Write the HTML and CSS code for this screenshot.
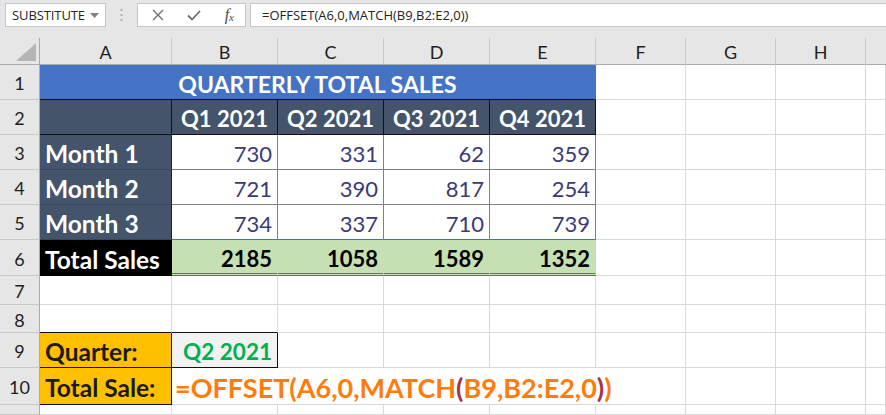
FILE: index.html
```html
<!DOCTYPE html>
<html>
<head>
<meta charset="utf-8">
<link rel="stylesheet" href="styles.css">
</head>
<body>
<div class="app">
  <div class="toolbar">
    <div class="namebox">
      <span class="nbtext">SUBSTITUTE</span>
      <svg class="caret" width="9" height="5" viewBox="0 0 9 5"><path d="M0 0H9L4.5 5Z" fill="#808080"/></svg>
    </div>
    <div class="dots">
      <svg width="3" height="14" viewBox="0 0 3 14"><rect x="0.5" y="1" width="2" height="2" fill="#b0b0b0"/><rect x="0.5" y="6" width="2" height="2" fill="#b0b0b0"/><rect x="0.5" y="11" width="2" height="2" fill="#b0b0b0"/></svg>
    </div>
    <div class="fbtns">
      <svg class="ic" width="12" height="12" viewBox="0 0 12 12"><path d="M1 1L11 11M11 1L1 11" stroke="#6e6e6e" stroke-width="1.4" fill="none"/></svg>
      <svg class="ic" width="14" height="11" viewBox="0 0 14 11"><path d="M1 5.5L5 9.5L13 1" stroke="#6e6e6e" stroke-width="1.8" fill="none"/></svg>
      <span class="fx">f<sub>x</sub></span>
    </div>
    <div class="fbar">=OFFSET(A6,0,MATCH(B9,B2:E2,0))</div>
  </div>

  <div class="sheet">
    <!-- column headers -->
    <div class="corner"><svg width="20" height="18" viewBox="0 0 20 18"><path d="M20 0V18H0Z" fill="#b5b5b5"/></svg></div>
    <div class="ch">A</div><div class="ch">B</div><div class="ch">C</div><div class="ch">D</div><div class="ch">E</div><div class="ch">F</div><div class="ch">G</div><div class="ch">H</div><div class="ch last"></div>

    <!-- row 1 -->
    <div class="rh">1</div>
    <div class="c title">QUARTERLY TOTAL SALES</div>
    <div class="c"></div><div class="c"></div><div class="c"></div><div class="c"></div>

    <!-- row 2 -->
    <div class="rh">2</div>
    <div class="c hd"></div>
    <div class="c hd q">Q1 2021</div><div class="c hd q">Q2 2021</div><div class="c hd q">Q3 2021</div><div class="c hd q">Q4 2021</div>
    <div class="c"></div><div class="c"></div><div class="c"></div><div class="c"></div>

    <!-- row 3 -->
    <div class="rh">3</div>
    <div class="c mo">Month 1</div>
    <div class="c num">730</div><div class="c num">331</div><div class="c num">62</div><div class="c num">359</div>
    <div class="c"></div><div class="c"></div><div class="c"></div><div class="c"></div>

    <!-- row 4 -->
    <div class="rh">4</div>
    <div class="c mo">Month 2</div>
    <div class="c num">721</div><div class="c num">390</div><div class="c num">817</div><div class="c num">254</div>
    <div class="c"></div><div class="c"></div><div class="c"></div><div class="c"></div>

    <!-- row 5 -->
    <div class="rh">5</div>
    <div class="c mo">Month 3</div>
    <div class="c num lastnum">734</div><div class="c num lastnum">337</div><div class="c num lastnum">710</div><div class="c num lastnum">739</div>
    <div class="c"></div><div class="c"></div><div class="c"></div><div class="c"></div>

    <!-- row 6 -->
    <div class="rh">6</div>
    <div class="c tot">Total Sales</div>
    <div class="c totn">2185</div><div class="c totn">1058</div><div class="c totn">1589</div><div class="c totn end">1352</div>
    <div class="c"></div><div class="c"></div><div class="c"></div><div class="c"></div>

    <!-- row 7 -->
    <div class="rh">7</div>
    <div class="c"></div><div class="c"></div><div class="c"></div><div class="c"></div><div class="c"></div><div class="c"></div><div class="c"></div><div class="c"></div><div class="c"></div>

    <!-- row 8 -->
    <div class="rh">8</div>
    <div class="c abovebox"></div><div class="c abovebox"></div><div class="c"></div><div class="c"></div><div class="c"></div><div class="c"></div><div class="c"></div><div class="c"></div><div class="c"></div>

    <!-- row 9 -->
    <div class="rh">9</div>
    <div class="c lbl">Quarter:</div>
    <div class="c qv">Q2 2021</div>
    <div class="c"></div><div class="c"></div><div class="c"></div><div class="c"></div><div class="c"></div><div class="c"></div><div class="c"></div>

    <!-- row 10 -->
    <div class="rh">10</div>
    <div class="c lbl">Total Sale:</div>
    <div class="c formula">=OFFSET(A6,0,MATCH<span class="pr">(</span>B9,B2:E2,0<span class="pr">)</span>)</div>
    <div class="c"></div><div class="c"></div><div class="c"></div>

    <!-- row 11 -->
    <div class="rh"></div>
    <div class="c"></div><div class="c"></div><div class="c"></div><div class="c"></div><div class="c"></div><div class="c"></div><div class="c"></div><div class="c"></div><div class="c"></div>
  </div>
</div>
</body>
</html>
```

FILE: styles.css
```css
* { box-sizing: border-box; }
html, body { margin: 0; padding: 0; }
body {
  width: 886px;
  height: 415px;
  overflow: hidden;
  background: #ffffff;
  font-family: "Lato", "Open Sans", sans-serif;
}
.app {
  display: flex;
  flex-direction: column;
  height: 415px;
}

/* ---------- toolbar ---------- */
.toolbar {
  height: 38px;
  background: #e6e6e6;
  display: flex;
  align-items: flex-start;
  padding: 3px 0 0 5px;
  font-family: "Open Sans", "Noto Sans", sans-serif;
}
.namebox {
  width: 101px;
  height: 24px;
  background: #fff;
  border: 1px solid #c6c6c6;
  display: flex;
  align-items: center;
  padding: 0 6px 0 6px;
  justify-content: space-between;
}
.nbtext {
  font-size: 13px;
  color: #262626;
  letter-spacing: -0.1px;
}
.caret { margin-top: 1px; }
.dots {
  width: 31px;
  height: 24px;
  display: flex;
  align-items: center;
  justify-content: center;
}
.fbtns {
  width: 109px;
  height: 24px;
  background: #fff;
  border: 1px solid #c6c6c6;
  display: flex;
  align-items: center;
  padding: 0 11px 0 14px;
  justify-content: space-between;
}
.fx {
  font-family: "Liberation Serif", "DejaVu Serif", serif;
  font-style: italic;
  font-size: 16px;
  color: #4a4a4a;
  line-height: 1;
}
.fx sub { font-size: 11px; vertical-align: -1px; }
.fbar {
  margin-left: 4px;
  flex: 1;
  height: 24px;
  background: #fff;
  border: 1px solid #c6c6c6;
  border-right: none;
  display: flex;
  align-items: center;
  padding-left: 11px;
  font-size: 13px;
  color: #222;
}

/* ---------- sheet ---------- */
.sheet {
  flex: 1;
  display: grid;
  grid-template-columns: 40px 132px 106px 106px 106px 106px 90px 90px 90px 1fr;
  grid-template-rows: 27px 35px 35px 35px 35px 35px 36px 29px 28px 35px 37px 1fr;
  background: #fff;
}
.corner {
  background: #e6e6e6;
  border-right: 1px solid #ababab;
  border-bottom: 1px solid #ababab;
  display: flex;
  align-items: flex-end;
  justify-content: flex-end;
  padding: 0 3px 3px 0;
}
.ch {
  background: #e6e6e6;
  border-right: 1px solid #c8c8c8;
  border-bottom: 1px solid #ababab;
  display: flex;
  align-items: center;
  justify-content: center;
  font-size: 18px;
  color: #1e1e1e;
  padding-top: 1px;
}
.ch.last { border-right: none; }
.rh {
  background: #e6e6e6;
  border-right: 1px solid #ababab;
  border-bottom: 1px solid #c8c8c8;
  display: flex;
  align-items: center;
  justify-content: center;
  font-size: 18px;
  color: #1e1e1e;
  padding-top: 2px;
}
.c {
  border-right: 1px solid #d9d9d9;
  border-bottom: 1px solid #d9d9d9;
  display: flex;
  align-items: center;
  font-size: 22px;
  white-space: nowrap;
  padding: 3px 5px 0 5px;
}
.title {
  grid-column: 2 / span 5;
  background: #4472c4;
  color: #fff;
  font-weight: 700;
  font-size: 23px;
  justify-content: center;
  border-right-color: #4472c4;
  border-bottom-color: #111;
}
.hd {
  background: #44546a;
  border-right-color: #111;
  border-bottom-color: #111;
}
.q {
  color: #fff;
  font-weight: 700;
  justify-content: center;
}
.mo {
  background: #44546a;
  color: #fff;
  font-weight: 700;
  font-size: 24.5px;
  border-right-color: #222;
  border-bottom-color: #38455a;
}
.num {
  justify-content: flex-end;
  color: #3b3a75;
  border-right-color: #808080;
  border-bottom-color: #808080;
}
.num.lastnum { border-bottom-color: #4472c4; }
.tot {
  background: #000;
  color: #fff;
  font-weight: 700;
  font-size: 24.5px;
  border-right-color: #000;
  border-bottom-color: #000;
}
.totn {
  background: #c6e0b4;
  color: #000;
  font-weight: 700;
  justify-content: flex-end;
  border-right-color: #c6e0b4;
  border-bottom: 3px double #4472c4;
  padding-top: 4px;
}
.abovebox { border-bottom-color: #111; }
.lbl {
  background: #ffc000;
  color: #1a1a1a;
  font-weight: 700;
  font-size: 24.5px;
  border-right-color: #111;
  border-bottom-color: #111;
}
.qv {
  background: #f2f2f2;
  color: #00b050;
  font-weight: 700;
  font-size: 22.5px;
  justify-content: flex-end;
  border-right-color: #111;
  border-bottom-color: #111;
}
.formula {
  grid-column: 3 / span 5;
  color: #ff7c0c;
  font-weight: 700;
  font-size: 27px;
  padding-left: 3px;
}
.pr { color: #a8314e; }
```
